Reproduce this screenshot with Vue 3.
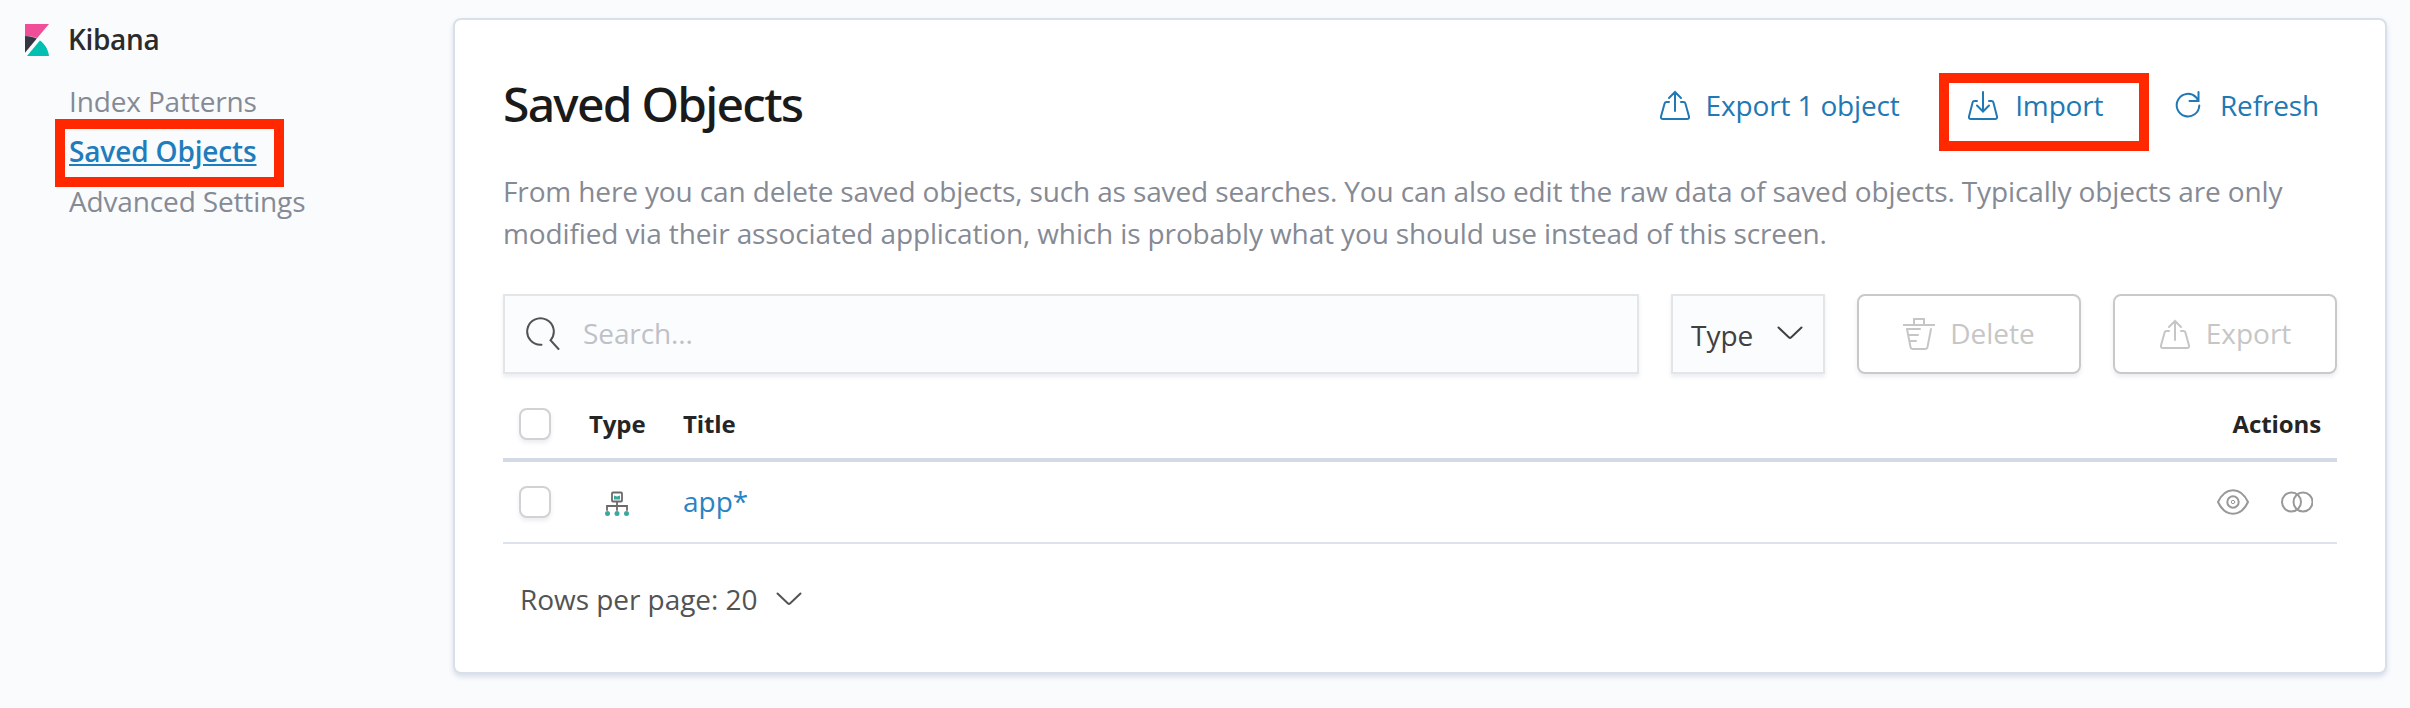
<script setup>
const columns = ['Type', 'Title']
</script>

<template>
  <div class="page">
    <nav class="sidebar">
      <div class="brand">
        <svg class="logo" viewBox="0 0 24 32" width="24" height="32">
          <path fill="#f04e98" d="M0 0h24L12 14.2C8.500 12.700 4.500 12 0 12z" />
          <path fill="#343741" d="M0 12c4.300 0 8.300 .9 11.800 2.600L0 28.800z" />
          <path fill="#00bfb3" d="M14.900 16.600C19.800 20 23.100 25.500 24 32H2z" />
        </svg>
        <span class="brand-name">Kibana</span>
      </div>
      <a class="nav-link">Index Patterns</a>
      <a class="nav-link active"><span>Saved Objects</span><i class="mark mark-nav"></i></a>
      <a class="nav-link">Advanced Settings</a>
    </nav>

    <main class="panel">
      <header class="head">
        <h1>Saved Objects</h1>
        <div class="actions">
          <button class="link-btn export-all">
            <svg viewBox="0 0 32 32" width="32" height="32"><path d="M10 13H7.500Q6 13 5.600 14.500L2 27.500Q1.500 30 4 30H28Q30.500 30 30 27.500L26.400 14.500Q26 13 24.500 13H22M16 22V3M10 9L16 3L22 9" /></svg>
            <span>Export 1 object</span>
          </button>
          <button class="link-btn import">
            <svg viewBox="0 0 32 32" width="32" height="32"><path d="M10 12H7.500Q6 12 5.600 13.500L2 27.500Q1.500 30 4 30H28Q30.500 30 30 27.500L26.400 13.500Q26 12 24.500 12H22M16 3V22M10 16.500L16 22.500L22 16.500" /></svg>
            <span>Import</span>
            <i class="mark mark-import"></i>
          </button>
          <button class="link-btn refresh">
            <svg viewBox="0 0 28 32" width="28" height="32"><path d="M24.500 3V12H15.500M24.500 12L22 8.200A11.300 11.300 0 1 0 25.300 16.500" /></svg>
            <span>Refresh</span>
          </button>
        </div>
      </header>

      <p class="intro">
        From here you can delete saved objects, such as saved searches. You can also edit the raw data of saved objects. Typically objects are only<br />
        modified via their associated application, which is probably what you should use instead of this screen.
      </p>

      <div class="toolbar">
        <div class="search">
          <svg viewBox="0 0 34 34" width="34" height="34"><path d="M15.500 27.800A13.300 13.300 0 1 1 24.500 23.300L32.500 32" /></svg>
          <span>Search...</span>
        </div>
        <div class="filter">
          <span>Type</span>
          <svg viewBox="0 0 26 14" width="26" height="14"><path d="M1.500 1.500L12 11.500Q13 12.300 14 11.500L24.500 1.500" /></svg>
        </div>
        <button class="box-btn">
          <svg viewBox="0 0 32 32" width="32" height="32"><path d="M0 7H32M11 7V1H21V7M4 11L7.500 29Q8 31 10 31H22Q24 31 24.500 29L28 11M5 11H17M6 17H15M7 23H13" /></svg>
          <span>Delete</span>
        </button>
        <button class="box-btn">
          <svg viewBox="0 0 32 32" width="32" height="32"><path d="M10 13H7.500Q6 13 5.600 14.500L2 27.500Q1.500 30 4 30H28Q30.500 30 30 27.500L26.400 14.500Q26 13 24.500 13H22M16 22V3M10 9L16 3L22 9" /></svg>
          <span>Export</span>
        </button>
      </div>

      <section class="table">
        <div class="row row-head">
          <i class="check"></i>
          <span v-for="c in columns" :key="c">{{ c }}</span>
          <span class="end">Actions</span>
        </div>
        <div class="row row-item">
          <i class="check"></i>
          <svg class="type-icon" viewBox="0 0 24 26" width="24" height="26">
            <path fill="none" stroke="#6a6a6a" stroke-width="1.800" d="M8 1.500H16Q17 1.500 17 2.500V9.500Q17 10.500 16 10.500H8Q7 10.500 7 9.500V2.500Q7 1.500 8 1.500ZM12 11V19M2 19V15H22V19" />
            <path fill="#3aa89c" d="M9 4.500L12 5.500L15 4.500V8.500H9Z" />
            <circle cx="2.500" cy="22.500" r="2.500" fill="#3aa89c" /><circle cx="12" cy="22.500" r="2.500" fill="#3aa89c" /><circle cx="21.500" cy="22.500" r="2.500" fill="#3aa89c" />
          </svg>
          <a class="title">app*</a>
          <div class="row-actions">
            <svg viewBox="0 0 32 26" width="32" height="26"><path d="M1 13Q6.500 1.200 16 1.200T31 13Q25.500 24.800 16 24.800T1 13Z" /><circle cx="16" cy="13" r="5.700" /><circle class="dot" cx="16" cy="13" r="1.700" /></svg>
            <svg viewBox="0 0 32 22" width="32" height="22"><rect x="1" y="1.500" width="19" height="19" rx="9.500" /><rect x="12.500" y="1.500" width="19" height="19" rx="9.500" /></svg>
          </div>
        </div>
      </section>

      <footer class="pager">
        <span>Rows per page: 20</span>
        <svg viewBox="0 0 26 14" width="26" height="14"><path d="M1.500 1.500L12 11.500Q13 12.300 14 11.500L24.500 1.500" /></svg>
      </footer>
    </main>
  </div>
</template>

<style>
body {
  margin: 0;
  background: #fafbfd;
}
</style>

<style scoped>
.page {
  box-sizing: border-box;
  display: flex;
  width: 2410px;
  height: 708px;
  padding: 18px 23px 34px 25px;
  background: #fafbfd;
  color: #404040;
  font-family: "Open Sans", "Noto Sans", sans-serif;
  font-size: 28px;
  line-height: 42px;
  white-space: nowrap;
  overflow: hidden;
}
svg {
  flex: none;
  display: block;
  fill: none;
  stroke: currentColor;
  stroke-width: 2;
  stroke-linecap: round;
}
.logo, .type-icon { stroke: none; }
.sidebar {
  flex: none;
  width: 428px;
}
.brand {
  display: flex;
  align-items: center;
  height: 44px;
  margin-bottom: 14px;
}
.brand-name {
  margin: -2px 0 0 19px;
  color: #2b2b2b;
  font-weight: 600;
  letter-spacing: -0.350px;
}
.nav-link {
  position: relative;
  display: block;
  width: max-content;
  height: 50px;
  margin-left: 44px;
  line-height: 50px;
  letter-spacing: -0.150px;
  color: #858a95;
}
.active {
  color: #1f7dbe;
  font-weight: 600;
  text-decoration: underline;
}
.mark {
  position: absolute;
  box-sizing: border-box;
  border: 10px solid #ff2800;
}
.mark-nav { left: -14px; top: -7px; width: 229px; height: 68px; }
.mark-import { left: -28px; top: 5px; width: 210px; height: 78px; }
.panel {
  box-sizing: border-box;
  width: 1934px;
  height: 656px;
  padding: 48px;
  border: 2px solid #dae0ea;
  border-radius: 8px;
  background: #fff;
  box-shadow: 0 3px 5px rgba(120, 140, 175, 0.25);
}
.head {
  display: flex;
  justify-content: space-between;
  height: 74px;
}
h1 {
  margin: 0;
  font-family: "Noto Sans", sans-serif;
  font-size: 48px;
  font-weight: 500;
  line-height: 71px;
  letter-spacing: -1.750px;
  color: #1a1a1a;
}
.actions { display: flex; }
button {
  padding: 0;
  border: 0;
  background: none;
  font: inherit;
}
.link-btn {
  position: relative;
  display: flex;
  align-items: center;
  letter-spacing: -0.150px;
  color: #2079b5;
}
.export-all span { margin-left: 14.500px; }
.import { margin-left: 67px; }
.import span { margin-left: 16.500px; }
.refresh { margin-left: 71px; margin-right: 18px; }
.refresh span { margin-left: 17.500px; }
.intro {
  margin: 28px 0 40px;
  letter-spacing: -0.130px;
  color: #858a95;
}
.toolbar {
  display: flex;
  gap: 32px;
  height: 80px;
}
.search, .filter, .box-btn {
  box-sizing: border-box;
  display: flex;
  align-items: center;
  box-shadow: 0 3px 4px rgba(100, 110, 140, 0.12);
}
.search, .filter {
  border: 2px solid #e4e5e7;
  background: #fbfcfd;
}
.search {
  flex: 1;
  padding-left: 21px;
  color: #535353;
}
.search span { margin: -2px 0 0 23px; color: #bfc1c8; letter-spacing: -0.100px; }
.filter {
  width: 154px;
  justify-content: space-between;
  padding: 2px 20px 0 18px;
}
.filter svg { margin-top: -4px; }
.box-btn {
  width: 224px;
  justify-content: center;
  gap: 15px;
  border: 2px solid #c9c9c9;
  border-radius: 8px;
  color: #c6c6c6;
}
.box-btn span { margin-top: -2px; }
.table { margin-top: 16px; }
.row {
  display: grid;
  grid-template-columns: 70px 94px 1fr auto;
  align-items: center;
  padding: 0 16px;
}
.row-head {
  height: 68px;
  border-bottom: 4px solid #d3dae6;
  color: #252525;
  font-size: 24px;
  font-weight: 700;
  letter-spacing: -0.100px;
}
.row-item {
  height: 80px;
  border-bottom: 2px solid #dde3ec;
}
.check {
  box-sizing: border-box;
  width: 32px;
  height: 32px;
  border: 2px solid #d0d2d3;
  border-radius: 8px;
  background: #fff;
  box-shadow: 0 3px 4px rgba(100, 110, 140, 0.12);
}
.type-icon { margin: 4px 0 0 16px; }
.title { margin-top: -2px; color: #2a83c2; }
.row-actions {
  display: flex;
  align-items: center;
  gap: 32px;
  margin-right: 8px;
  color: #999;
}
.dot { stroke-width: 1; }
.pager {
  display: flex;
  align-items: center;
  gap: 19px;
  height: 110px;
  padding-left: 17px;
  letter-spacing: -0.050px;
  color: #535353;
}
</style>
